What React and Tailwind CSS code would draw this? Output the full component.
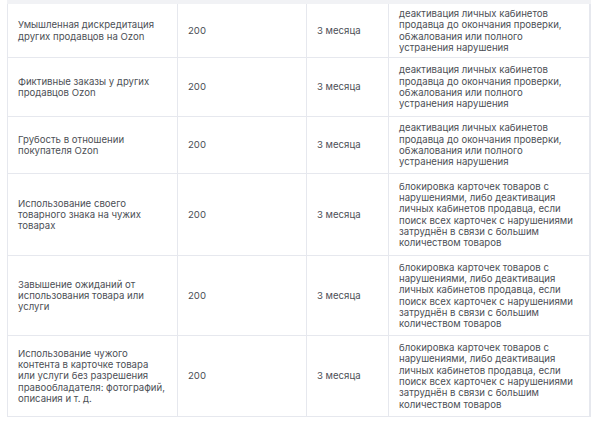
import React from "react";

const DEACT =
    "деактивация личных кабинетов продавца до окончания проверки, обжалования или полного устранения нарушения";
const BLOCK =
    "блокировка карточек товаров с нарушениями, либо деактивация личных кабинетов продавца, если поиск всех карточек с нарушениями затруднён в связи с большим количеством товаров";

const rows = [
    { name: "Умышленная дискредитация других продавцов на Ozon", action: DEACT, h: "h-[54px]" },
    { name: "Фиктивные заказы у других продавцов Ozon", action: DEACT, h: "h-[59px]" },
    { name: "Грубость в отношении покупателя Ozon", action: DEACT, h: "h-[57px]" },
    { name: "Использование своего товарного знака на чужих товарах", action: BLOCK, h: "h-[82px]" },
    { name: "Завышение ожиданий от использования товара или услуги", action: BLOCK, h: "h-[80px]" },
    {
        name: "Использование чужого контента в карточке товара или услуги без разрешения правообладателя: фотографий, описания и т. д.",
        action: BLOCK,
        h: "h-[80px]",
    },
];

function App() {
    return (
        <div className="w-[600px] h-[422px] bg-white overflow-hidden font-['Inter','Noto_Sans',sans-serif] text-[9.6px] leading-[11.3px] text-[#4c4f56]">
            <div className="ml-[7px] w-[584px]">
                <div className="h-[4px] bg-[#f1f2f5]"></div>
                <div className="border-l border-r-2 border-b border-[#e6e8ee]">
                    {rows.map((row, i) => (
                        <div
                            key={i}
                            className={`grid grid-cols-[170px_129px_82px_200px] ${row.h} ${i < rows.length - 1 ? "border-b border-[#e6e8ee]" : ""}`}
                        >
                            <div className="flex items-center px-[10px] border-r border-[#e6e8ee]">
                                {row.name}
                            </div>
                            <div className="flex items-center px-[10px] border-r border-[#e6e8ee]">
                                200
                            </div>
                            <div className="flex items-center px-[10px] border-r border-[#e6e8ee]">
                                3 месяца
                            </div>
                            <div className="flex items-center pl-[10px]">
                                <div className="max-w-[176px]">{row.action}</div>
                            </div>
                        </div>
                    ))}
                </div>
            </div>
        </div>
    );
}

export default App;
